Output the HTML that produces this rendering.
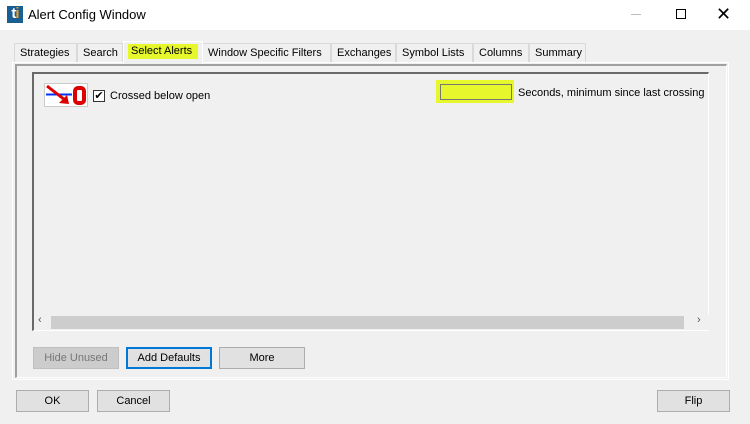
<!DOCTYPE html>
<html><head><style>
*{box-sizing:border-box;margin:0;padding:0}
body{width:750px;height:424px;background:#f0f0f0;font-family:"Liberation Sans",sans-serif;font-size:11px;color:#000;position:relative;overflow:hidden}
.abs{position:absolute}
.tab{position:absolute;top:43px;height:19px;border:1px solid #d9d9d9;border-bottom:none;background:#f0f0f0;padding:3px 0 0 5px;white-space:nowrap}
.btn{position:absolute;height:22px;border:1px solid #adadad;background:#e1e1e1;text-align:center;line-height:20px}
</style></head><body>
<div class="abs" style="left:0;top:0;width:750px;height:30px;background:#fff"></div>
<div class="abs" style="left:7px;top:6px;width:16px;height:17px;background:#1a5f93;color:#fff;font-weight:bold;font-size:15px;line-height:16px;text-align:center;letter-spacing:-1px">t<span style="color:#f39a1e">i</span></div>
<div class="abs" style="left:28px;top:7px;font-size:13px">Alert Config Window</div>
<div class="abs" style="left:631px;top:14px;width:10px;height:1px;background:#bbb"></div>
<div class="abs" style="left:676px;top:9px;width:10px;height:10px;border:1px solid #000"></div>
<div class="abs" style="left:716px;top:4px;font-size:18px;line-height:20px">✕</div>

<div class="abs" style="left:12px;top:62px;width:717px;height:318px;border:1px solid #fff;background:#f0f0f0"></div>
<div class="tab" style="left:14px;width:63px">Strategies</div>
<div class="tab" style="left:77px;width:46px">Search</div>
<div class="tab" style="left:202px;width:129px">Window Specific Filters</div>
<div class="tab" style="left:331px;width:65px">Exchanges</div>
<div class="tab" style="left:396px;width:77px">Symbol Lists</div>
<div class="tab" style="left:473px;width:56px">Columns</div>
<div class="tab" style="left:529px;width:57px">Summary</div>
<div class="abs" style="left:123px;top:41px;width:80px;height:23px;background:#f0f0f0;border:1px solid #fff;border-bottom:none"></div>
<div class="abs" style="left:128px;top:44px;width:70px;height:15px;background:#e6f72c;padding:1px 0 0 3px">Select Alerts</div>

<div class="abs" style="left:15px;top:64px;width:712px;height:314px;border-top:2px solid #a0a0a0;border-left:2px solid #a0a0a0;border-right:1px solid #fff;border-bottom:1px solid #fff"></div>
<div class="abs" style="left:32px;top:72px;width:677px;height:259px;border-top:2px solid #696969;border-left:2px solid #696969;border-right:1px solid #fff;border-bottom:1px solid #fff"></div>
<div class="abs" style="left:34px;top:315px;width:675px;height:15px;background:#f0f0f0"></div>
<div class="abs" style="left:51px;top:316px;width:633px;height:13px;background:#cdcdcd"></div>
<div class="abs" style="left:38px;top:314px;font-size:11px;color:#555">‹</div>
<div class="abs" style="left:697px;top:314px;font-size:11px;color:#555">›</div>

<svg class="abs" style="left:44px;top:83px" width="44" height="24" viewBox="0 0 44 24">
<rect x="0.5" y="0.5" width="43" height="23" fill="#fff" stroke="#ccc"/>
<line x1="2" y1="11.5" x2="28" y2="11.5" stroke="#0033ff" stroke-width="2"/>
<line x1="3" y1="3" x2="21" y2="17" stroke="#d00" stroke-width="3"/>
<polygon points="15,20 25,21 23,12" fill="#d00"/>
<rect x="31" y="5" width="9" height="15" rx="3" fill="none" stroke="#d00" stroke-width="4"/>
</svg>
<div class="abs" style="left:93px;top:90px;width:12px;height:12px;border:1px solid #333;background:#fff;font-size:11px;line-height:10px;text-align:center">✔</div>
<div class="abs" style="left:110px;top:90px">Crossed below open</div>
<div class="abs" style="left:436px;top:80px;width:78px;height:23px;background:#e6f72c"></div>
<div class="abs" style="left:440px;top:84px;width:72px;height:16px;border:1px solid #777;background:#e6f72c"></div>
<div class="abs" style="left:518px;top:87px;width:190px;overflow:hidden;white-space:nowrap">Seconds, minimum since last crossing</div>

<div class="btn" style="left:33px;top:347px;width:86px;background:#ccc;color:#777;border-color:#bfbfbf">Hide Unused</div>
<div class="btn" style="left:126px;top:347px;width:86px;border:2px solid #0078d7;line-height:18px">Add Defaults</div>
<div class="btn" style="left:219px;top:347px;width:86px">More</div>
<div class="btn" style="left:16px;top:390px;width:73px">OK</div>
<div class="btn" style="left:97px;top:390px;width:73px">Cancel</div>
<div class="btn" style="left:657px;top:390px;width:73px">Flip</div>
</body></html>
